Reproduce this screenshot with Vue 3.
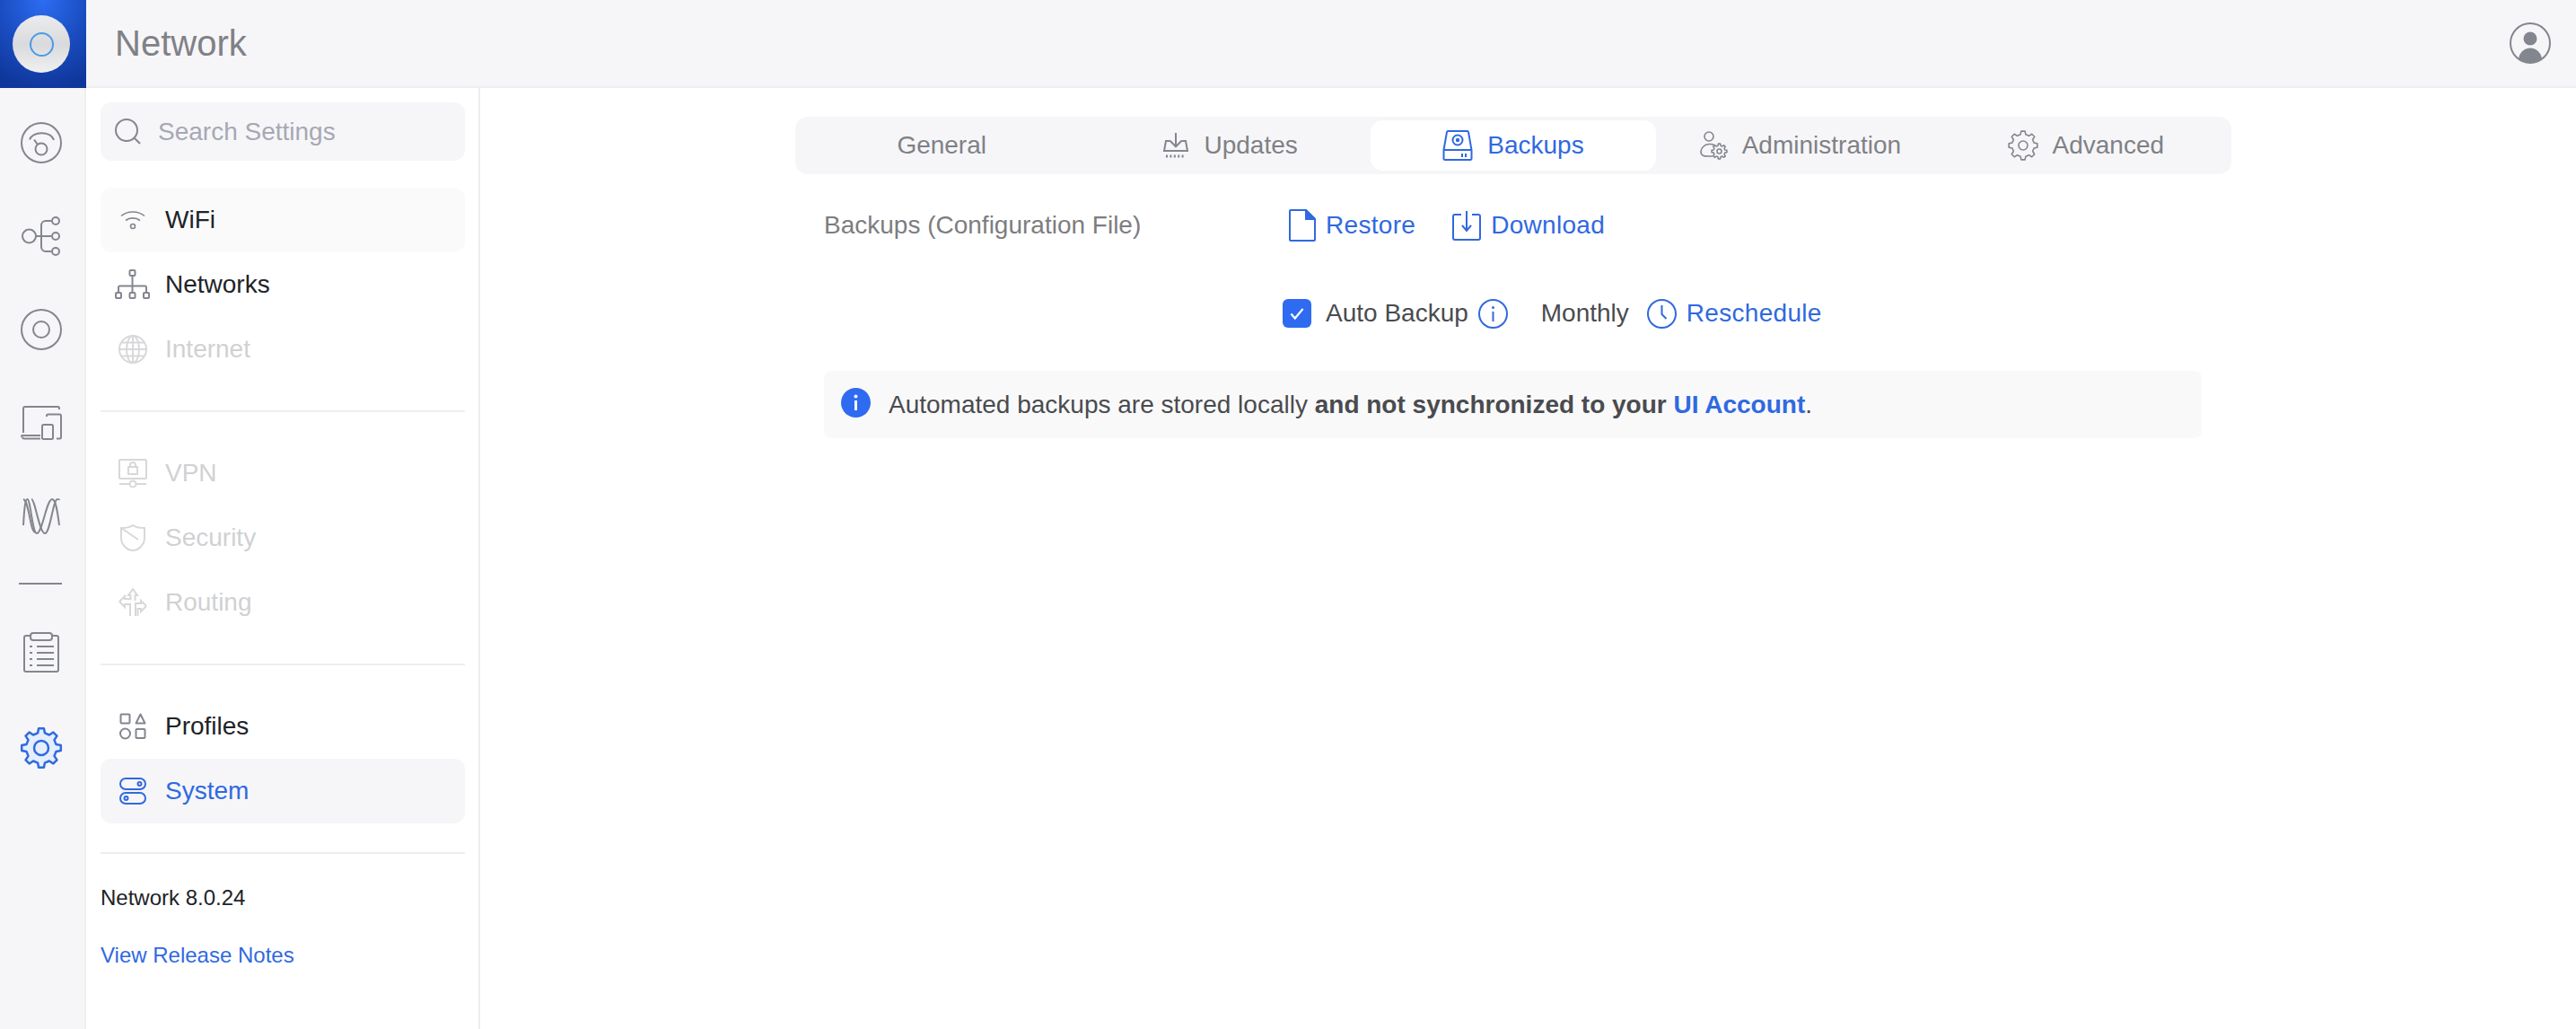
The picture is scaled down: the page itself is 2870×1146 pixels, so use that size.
<template>
  <div class="app">
    <header class="topbar">
      <div class="logo">
        <div class="disk"><div class="ring"></div></div>
      </div>
      <h1 class="title">Network</h1>
      <svg class="avatar" width="46" height="46" viewBox="0 0 46 46">
        <defs>
          <clipPath id="avatar-clip"><circle cx="23" cy="23" r="21.5" /></clipPath>
        </defs>
        <circle cx="23" cy="23" r="22" fill="none" stroke="#84868f" stroke-width="2" />
        <circle cx="23" cy="18" r="7.500" fill="#84868f" />
        <ellipse cx="23" cy="42" rx="13" ry="13.500" fill="#84868f" clip-path="url(#avatar-clip)" />
      </svg>
    </header>

    <div class="body">
      <nav class="rail">
        <div class="rail-item">
          <svg width="46" height="46" viewBox="0 0 46 46" class="stroke-grey">
            <circle cx="23" cy="23" r="22" />
            <path d="M10 19.500C13 10.500 33 9 37 20" />
            <circle cx="23" cy="30" r="6.500" />
            <path d="M15 19.500l4 5.500" />
          </svg>
        </div>
        <div class="rail-item">
          <svg width="44" height="44" viewBox="0 0 44 44" class="stroke-grey">
            <circle cx="8.500" cy="22" r="7.500" />
            <path d="M16 22h17M33 5h-6a5 5 0 0 0-5 5v24a5 5 0 0 0 5 5h6" />
            <circle cx="38" cy="5" r="4" />
            <circle cx="38" cy="22" r="4" />
            <circle cx="38" cy="39" r="4" />
          </svg>
        </div>
        <div class="rail-item">
          <svg width="46" height="46" viewBox="0 0 46 46" class="stroke-grey">
            <circle cx="23" cy="23" r="22" />
            <circle cx="23" cy="23" r="9" />
          </svg>
        </div>
        <div class="rail-item">
          <svg width="46" height="38" viewBox="0 0 46 38" class="stroke-grey">
            <path d="M3 30V3a2 2 0 0 1 2-2h37a1.500 1.500 0 0 1 1 1.500V4" />
            <path d="M1 34.500a1 1 0 0 1 1-1.500h20M2 34.500a2 2 0 0 0 2 2h18" />
            <path d="M29 12v-1a1.500 1.500 0 0 1 1.500-1.500h13a1.500 1.500 0 0 1 1.500 1.500v24a1.500 1.500 0 0 1-1.500 1.500H40" />
            <rect x="24" y="21" width="12" height="16" rx="1.500" />
          </svg>
        </div>
        <div class="rail-item">
          <svg width="42" height="40" viewBox="0 0 42 40" class="stroke-grey">
            <path d="M1 30C2 12 3 1 5.500 1C9 1 11 39 16 39C22 39 27 1 33 1C37 1 39 14 41 30" />
            <path d="M10 1C14 1 19 39 25 39C31 39 34 1 39 1C40 1 41 1 41 2" />
            <path d="M1 1C5 2 7 16 10 30C11 34 12 37 14 38" />
          </svg>
        </div>
        <div class="rail-sep"></div>
        <div class="rail-item clipboard">
          <svg width="40" height="45" viewBox="0 0 40 45" class="stroke-grey">
            <rect x="1" y="4" width="38" height="40" rx="2" />
            <rect x="8" y="1" width="24" height="8" rx="3" fill="#f6f6f8" />
            <path d="M15 16h19M15 23h19M15 30h19M15 37h19M7 16h3M7 23h3M7 30h3M7 37h3" />
          </svg>
        </div>
        <div class="rail-item">
          <svg width="48" height="48" viewBox="0 0 48 48">
            <path :d="railGear" fill="#e4eefd" stroke="#3069e0" stroke-width="2.500" stroke-linejoin="round" />
            <circle cx="24" cy="24" r="8" fill="none" stroke="#3069e0" stroke-width="2.500" />
          </svg>
        </div>
      </nav>

      <aside class="sidebar">
        <div class="search">
          <svg width="30" height="30" viewBox="0 0 30 30" class="stroke-grey">
            <circle cx="13" cy="13" r="12" />
            <path d="M22 22l6 6" />
          </svg>
          <span>Search Settings</span>
        </div>

        <div class="nav-row hovered">
          <span class="nav-icon">
            <svg width="28" height="22" viewBox="0 0 28 22" class="stroke-grey thin">
              <path d="M1 6.500C8 0.500 20 0.500 27 6.500M6 11.500C10.500 8 17.500 8 22 11.500" />
              <circle cx="14" cy="18" r="2.500" />
            </svg>
          </span>
          WiFi
        </div>
        <div class="nav-row">
          <span class="nav-icon">
            <svg width="40" height="34" viewBox="0 0 40 34" class="stroke-grey">
              <rect x="16.500" y="1" width="6" height="6" rx="1" />
              <path d="M19.500 7v19M4 26v-6a1.500 1.500 0 0 1 1.500-1.500h28a1.500 1.500 0 0 1 1.500 1.500v6" />
              <rect x="1" y="26" width="6" height="6" rx="1" />
              <rect x="16.500" y="26" width="6" height="6" rx="1" />
              <rect x="32" y="26" width="6" height="6" rx="1" />
            </svg>
          </span>
          Networks
        </div>
        <div class="nav-row disabled">
          <span class="nav-icon">
            <svg width="32" height="32" viewBox="0 0 32 32" class="stroke-off">
              <circle cx="16" cy="16" r="15" />
              <ellipse cx="16" cy="16" rx="7" ry="15" />
              <path d="M16 1v30M1 16h30M3.500 8.500h25M3.500 23.500h25" />
            </svg>
          </span>
          Internet
        </div>

        <div class="divider"></div>

        <div class="nav-row disabled">
          <span class="nav-icon">
            <svg width="32" height="32" viewBox="0 0 32 32" class="stroke-off">
              <rect x="1" y="1" width="30" height="21" rx="1" />
              <rect x="11" y="9" width="10" height="8" />
              <path d="M13 9V7a3 3 0 0 1 6 0v2M1 28h11M20 28h11" />
              <circle cx="16" cy="28" r="3.500" />
            </svg>
          </span>
          VPN
        </div>
        <div class="nav-row disabled">
          <span class="nav-icon">
            <svg width="30" height="30" viewBox="0 0 30 30" class="stroke-off">
              <path d="M2 4C8 4 12 3 15 1C18 3 22 4 28 4V15C28 23 21 29 15 29C9 29 2 23 2 15Z" />
              <path d="M2 4l19 13" />
            </svg>
          </span>
          Security
        </div>
        <div class="nav-row disabled">
          <span class="nav-icon">
            <svg width="32" height="32" viewBox="0 0 32 32" class="stroke-off">
              <path d="M1 15L7 9v3h6.500V8H11L16 1l5 7h-2.500v6" />
              <path d="M1 15l6 6v-3h6v13" />
              <path d="M31 20l-6-6v3h-6v14" />
              <path d="M31 20l-6 6v-3h-3.500v8" />
            </svg>
          </span>
          Routing
        </div>

        <div class="divider"></div>

        <div class="nav-row">
          <span class="nav-icon">
            <svg width="30" height="30" viewBox="0 0 30 30" class="stroke-grey">
              <rect x="1.500" y="1.500" width="10" height="10" rx="1" />
              <path d="M23.500 1.500l5 10h-10z" stroke-linejoin="round" />
              <circle cx="6.500" cy="23" r="5.500" />
              <rect x="18.500" y="18" width="10" height="10" rx="1" />
            </svg>
          </span>
          Profiles
        </div>
        <div class="nav-row active">
          <span class="nav-icon">
            <svg width="30" height="30" viewBox="0 0 30 30" class="stroke-blue">
              <rect x="1" y="1" width="28" height="12" rx="6" />
              <rect x="1" y="17" width="28" height="12" rx="6" />
              <circle cx="22.500" cy="7" r="2" />
              <circle cx="7.500" cy="23" r="2" />
            </svg>
          </span>
          System
        </div>

        <div class="divider after-active"></div>
        <div class="version">Network 8.0.24</div>
        <div class="release-notes">View Release Notes</div>
      </aside>

      <main class="main">
        <div class="tabs">
          <div class="tab">General</div>
          <div class="tab tab-updates">
            <svg width="30" height="30" viewBox="0 0 30 30" class="stroke-grey">
              <path d="M15 1v15M8.500 9.700L15 16.300l6.500-6.600M8.500 10H4L2 21h26l-2-11h-4.500" />
              <path d="M4 27h22" stroke-dasharray="2 2.400" stroke-width="3" />
            </svg>
            Updates
          </div>
          <div class="tab current">
            <svg width="34" height="34" viewBox="0 0 34 34" class="stroke-blue">
              <path d="M1.500 22L5 2a1.500 1.500 0 0 1 1.500-1h21a1.500 1.500 0 0 1 1.500 1l3.500 20v10a1.500 1.500 0 0 1-1.500 1H3a1.500 1.500 0 0 1-1.500-1zM1.500 22h31" />
              <circle cx="17" cy="11" r="5.500" />
              <circle cx="17" cy="11" r="1.200" fill="#3069e0" />
              <path d="M22 26v4M26 26v4" />
            </svg>
            Backups
          </div>
          <div class="tab tab-shift">
            <svg width="32" height="32" viewBox="0 0 32 32" class="stroke-grey thin">
              <circle cx="11" cy="6" r="5" />
              <path d="M17 15.500C14 14 8 14 5 17C1.500 20 1 25 4 27C6 28.500 12 28 15 28" />
              <path :d="smallGear" stroke-linejoin="round" />
              <circle cx="22.500" cy="22.500" r="2.500" />
            </svg>
            Administration
          </div>
          <div class="tab tab-shift">
            <svg width="34" height="34" viewBox="0 0 34 34" class="stroke-grey thin">
              <path :d="tabGear" stroke-linejoin="round" />
              <circle cx="17" cy="17" r="5" />
            </svg>
            Advanced
          </div>
        </div>

        <div class="content">
          <div class="row first">
            <div class="row-label">Backups (Configuration File)</div>
            <div class="row-value">
              <span class="link indent">
                <svg width="30" height="36" viewBox="0 0 30 36" class="stroke-blue">
                  <path d="M1 2a1 1 0 0 1 1-1h17l10 10v23a1 1 0 0 1-1 1H2a1 1 0 0 1-1-1z" />
                  <path d="M19 1l10 10H19z" fill="#3069e0" />
                </svg>
                Restore
              </span>
              <span class="link second-link">
                <svg width="32" height="34" viewBox="0 0 32 34" class="stroke-blue">
                  <path d="M10 5H3a2 2 0 0 0-2 2v24a2 2 0 0 0 2 2h26a2 2 0 0 0 2-2V7a2 2 0 0 0-2-2h-7" />
                  <path d="M16 1v21M11 17l5 6 5-6" />
                </svg>
                Download
              </span>
            </div>
          </div>

          <div class="row second">
            <div class="row-label"></div>
            <div class="row-value">
              <span class="checkbox">
                <svg width="22" height="22" viewBox="0 0 20 20">
                  <path d="M4 10.500l4 4.500 8-9.500" fill="none" stroke="#fff" stroke-width="2" />
                </svg>
              </span>
              <span class="auto-label">Auto Backup</span>
              <svg class="auto-info" width="33" height="33" viewBox="0 0 33 33" fill="none">
                <circle cx="16.500" cy="16.500" r="15.500" stroke="#3069e0" stroke-width="2" />
                <circle cx="16.500" cy="9.500" r="1.500" fill="#3069e0" />
                <path d="M16.500 14v11" stroke="#3069e0" stroke-width="2" />
              </svg>
              <span class="monthly">Monthly</span>
              <span class="link">
                <svg width="33" height="33" viewBox="0 0 33 33" class="stroke-blue">
                  <circle cx="16.500" cy="16.500" r="15.500" />
                  <path d="M16.500 7v10l5 5" />
                </svg>
                Reschedule
              </span>
            </div>
          </div>

          <div class="notice">
            <svg width="33" height="33" viewBox="0 0 33 33">
              <circle cx="16.500" cy="16.500" r="16.500" fill="#2f6bf0" />
              <circle cx="16.500" cy="9.500" r="2" fill="#fff" />
              <path d="M16.500 14v11" stroke="#fff" stroke-width="3" />
            </svg>
            <span>Automated backups are stored locally <b>and not synchronized to your <a>UI Account</a></b>.</span>
          </div>
        </div>
      </main>
    </div>
  </div>
</template>

<script setup>
// gear outline with evenly spaced teeth, used for the settings icons
function gearPath(c, outer, inner, teeth) {
  const step = (Math.PI * 2) / teeth
  const parts = []
  for (let i = 0; i < teeth; i++) {
    const a = i * step - Math.PI / 2
    const pts = [
      [inner, a - step * 0.3],
      [outer, a - step * 0.17],
      [outer, a + step * 0.17],
      [inner, a + step * 0.3],
    ]
    for (const [r, t] of pts) {
      const x = (c + r * Math.cos(t)).toFixed(2)
      const y = (c + r * Math.sin(t)).toFixed(2)
      parts.push(`${parts.length ? 'L' : 'M'}${x} ${y}`)
    }
  }
  return parts.join(' ') + 'Z'
}

const railGear = gearPath(24, 22, 17, 8)
const tabGear = gearPath(17, 16, 12.5, 8)
const smallGear = gearPath(22.5, 8.5, 6.5, 8)
</script>

<style>
html,
body {
  margin: 0;
  background: #fff;
}
</style>

<style scoped>
.app {
  width: 2870px;
  height: 1146px;
  display: flex;
  flex-direction: column;
  font-family: "Liberation Sans", Arial, sans-serif;
  font-size: 28px;
  overflow: hidden;
  background: #fff;
}

.topbar {
  height: 96px;
  flex: none;
  display: flex;
  align-items: center;
  background: #f6f6f8;
  border-bottom: 2px solid #eeeef0;
}

.logo {
  width: 96px;
  height: 98px;
  margin-bottom: -2px;
  padding-right: 4px;
  box-sizing: border-box;
  flex: none;
  display: flex;
  align-items: center;
  justify-content: center;
  background: radial-gradient(ellipse 90px 100px at 50% 0, #2c6df2 0%, #1a4cc0 55%, #0f379b 100%);
}

.disk {
  width: 64px;
  height: 64px;
  border-radius: 50%;
  display: flex;
  align-items: center;
  justify-content: center;
  background: linear-gradient(180deg, #ececee 0%, #d9dadd 50%, #f0f0f0 100%);
}

.ring {
  width: 23px;
  height: 23px;
  border: 2.500px solid #4b9ae6;
  border-radius: 50%;
}

.title {
  margin: 0 0 0 32px;
  font-size: 40px;
  font-weight: 400;
  color: #808186;
  flex: 1;
}

.avatar {
  margin-right: 28px;
}

.body {
  flex: 1;
  display: flex;
  min-height: 0;
}

.rail {
  width: 96px;
  flex: none;
  box-sizing: border-box;
  padding: 9px 2px 0 0;
  background: #f6f6f8;
  border-right: 2px solid #eeeef0;
  display: flex;
  flex-direction: column;
  align-items: center;
}

.rail-item {
  height: 104px;
  width: 100%;
  flex: none;
  display: flex;
  align-items: center;
  justify-content: center;
}

.clipboard {
  margin-bottom: 3px;
}

.rail-sep {
  width: 48px;
  height: 2px;
  flex: none;
  background: #84868f;
  margin: 22px 0 23px -2px;
}

.stroke-grey,
.stroke-blue,
.stroke-off {
  fill: none;
  stroke-width: 2;
  flex: none;
}

.stroke-grey {
  stroke: #84868f;
}

.stroke-blue {
  stroke: #3069e0;
}

.stroke-off {
  stroke: #d8d8da;
}

.thin {
  stroke-width: 1.600;
}

.sidebar {
  width: 439px;
  flex: none;
  box-sizing: border-box;
  padding: 16px 15px 0 16px;
  border-right: 2px solid #eeeef0;
  color: #212327;
}

.search {
  height: 65px;
  margin-bottom: 30px;
  padding-left: 16px;
  border-radius: 12px;
  background: #f6f6f8;
  display: flex;
  align-items: center;
  gap: 18px;
  color: #a6a8b4;
}

.nav-row {
  height: 72px;
  border-radius: 12px;
  display: flex;
  align-items: center;
  gap: 16px;
  padding-left: 16px;
}

.nav-icon {
  width: 40px;
  height: 40px;
  flex: none;
  display: flex;
  align-items: center;
  justify-content: center;
}

.hovered {
  background: #fafafb;
}

.active {
  background: #f6f6f8;
  color: #3069e0;
}

.disabled {
  color: #d0d1d3;
}

.divider {
  height: 2px;
  margin: 32px 0;
  background: #eeeef0;
}

.after-active {
  margin-bottom: 0;
}

.version {
  margin-top: 35px;
  font-size: 24px;
  line-height: 28px;
}

.release-notes {
  margin-top: 36px;
  font-size: 24px;
  line-height: 28px;
  color: #3069e0;
}

.main {
  flex: 1;
  min-width: 0;
  padding: 32px 0 0 351px;
}

.tabs {
  width: 1600px;
  height: 64px;
  box-sizing: border-box;
  padding: 4px;
  border-radius: 14px;
  background: #f6f6f8;
  display: grid;
  grid-template-columns: repeat(5, 1fr);
}

.tab {
  display: flex;
  align-items: center;
  justify-content: center;
  gap: 16px;
  border-radius: 14px;
  color: #808186;
}

.tab-updates {
  padding-left: 6px;
}

.tab-shift {
  padding-left: 2px;
}

.current {
  background: #fff;
  color: #3069e0;
}

.content {
  width: 1535px;
  margin-left: 32px;
}

.row {
  display: flex;
  align-items: center;
}

.first {
  margin-top: 27px;
  height: 60px;
}

.second {
  margin-top: 38px;
  height: 60px;
}

.row-label {
  width: 511px;
  flex: none;
  color: #7d7d80;
}

.row-value {
  display: flex;
  align-items: center;
}

.link {
  display: flex;
  align-items: center;
  gap: 11px;
  color: #3069e0;
  letter-spacing: 0.300px;
}

.indent {
  margin-left: 7px;
}

.second-link {
  margin-left: 41px;
}

.checkbox {
  width: 32px;
  height: 32px;
  border-radius: 6px;
  background: #2f6bf0;
  display: flex;
  align-items: center;
  justify-content: center;
}

.auto-label {
  margin-left: 16px;
  color: #4a4b4f;
}

.auto-info {
  margin-left: 11px;
}

.monthly {
  margin-left: 37px;
  margin-right: 20px;
  color: #4a4b4f;
}

.notice {
  margin-top: 34px;
  height: 75px;
  box-sizing: border-box;
  padding-left: 19px;
  border-radius: 8px;
  background: #f9f9fa;
  display: flex;
  align-items: center;
  gap: 20px;
  color: #4a4b4f;
}

.notice svg {
  margin-top: -4px;
}

.notice a {
  color: #3069e0;
}
</style>
